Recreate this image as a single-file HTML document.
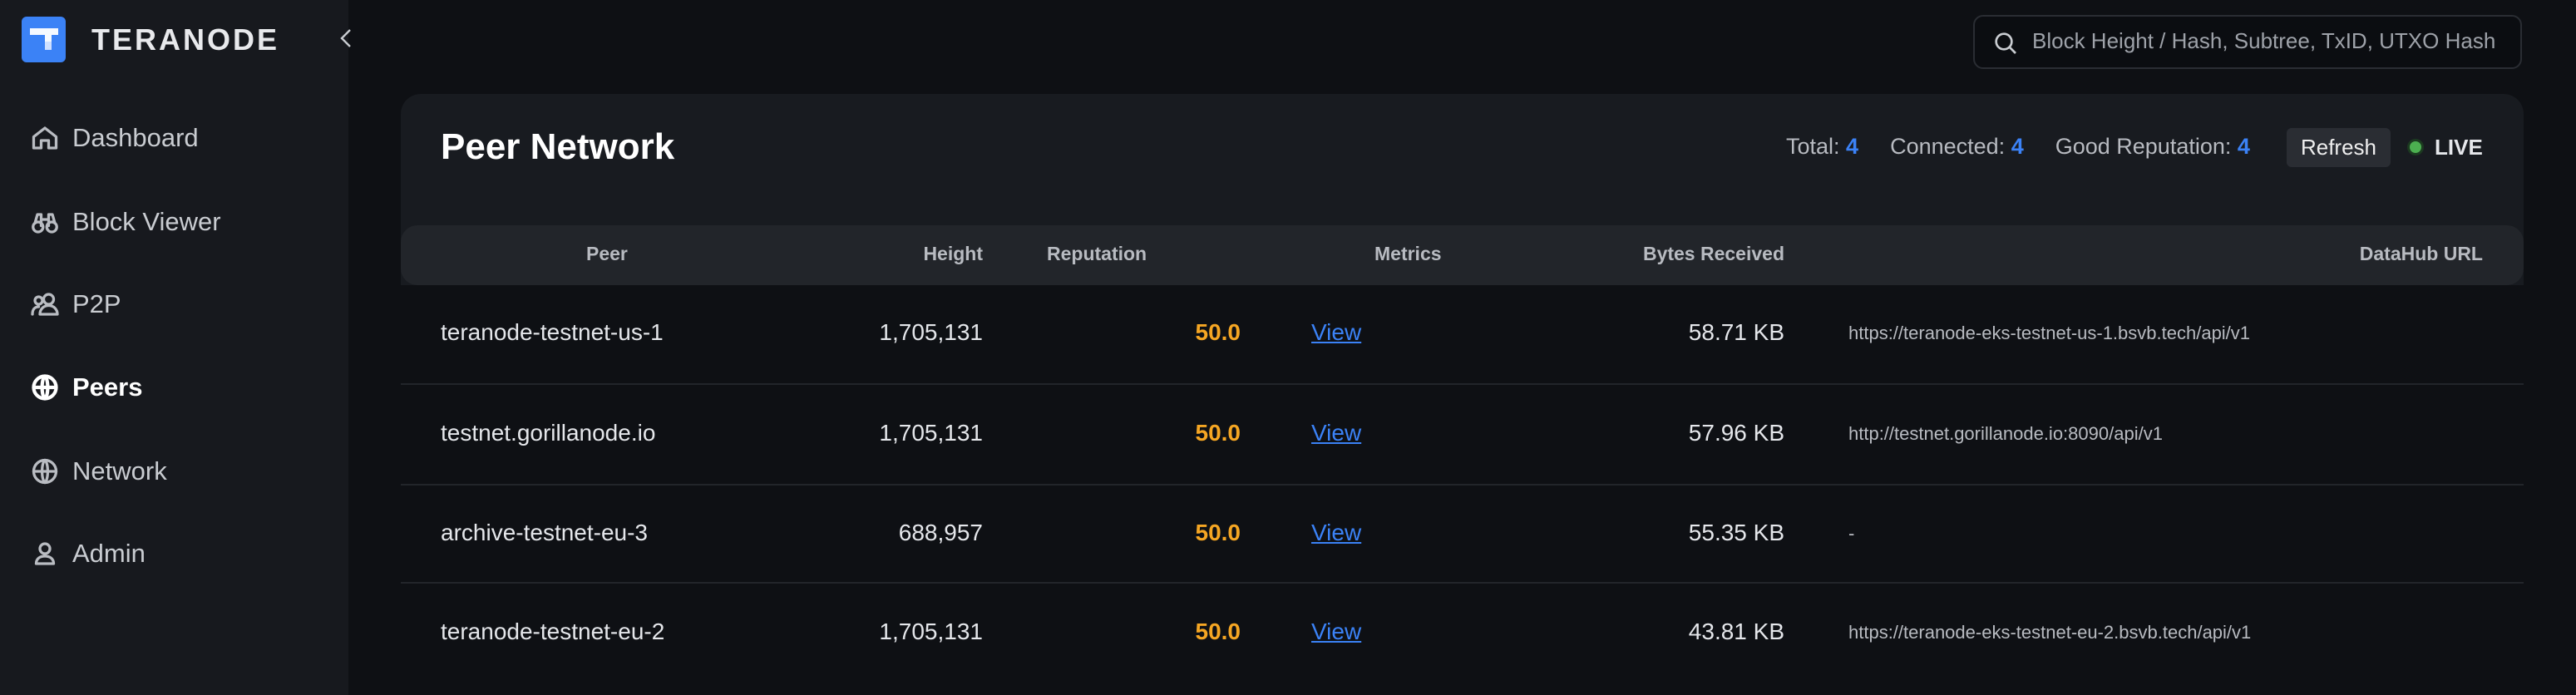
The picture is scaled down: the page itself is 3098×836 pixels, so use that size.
<!DOCTYPE html>
<html><head><meta charset="utf-8"><style>
*{margin:0;padding:0;box-sizing:border-box}
html,body{width:3098px;height:836px;overflow:hidden;background:#0e1014;font-family:"Liberation Sans",sans-serif;color:#e5e7eb}
.abs{position:absolute;white-space:nowrap}
#side{position:absolute;left:0;top:0;width:419px;height:836px;background:#17191e}
.nav{position:absolute;left:36px;height:40px;display:flex;align-items:center;font-size:31px;color:#c9ccd1}
.nav svg{width:36px;height:36px;margin-right:15px;fill:none;stroke:#b9bcc2;stroke-width:2.2;stroke-linecap:round;stroke-linejoin:round}
.th{position:absolute;top:292px;font-size:23px;font-weight:bold;color:#b8bbc1}
.td{position:absolute;font-size:28px;color:#e5e7eb;white-space:nowrap}
.r{text-align:right}
.line{position:absolute;left:482px;width:2553px;height:2px;background:#22252a}
</style></head><body>
<div id="side">
 <div class="abs" style="left:26px;top:20px;width:53px;height:55px;background:#3b82f6;border-radius:6px">
  <svg width="53" height="55" viewBox="0 0 53 55"><path d="M10 22h34v-8H10z M28 22v18h8V22" fill="#fff" opacity=".95"/><path d="M28 30v10h8V30z" fill="#cfe0ff"/></svg>
 </div>
 <div class="abs" style="left:110px;top:27px;font-size:36px;font-weight:bold;letter-spacing:3px;color:#e8e9ec">TERANODE</div>
 <svg class="abs" style="left:405px;top:33px" width="22" height="26" viewBox="0 0 22 26"><path d="M16 3L6 13l10 10" fill="none" stroke="#c9ccd1" stroke-width="2.4"/></svg>
 <div class="nav" style="top:146px"><svg viewBox="0 0 24 24"><path d="M3 11l9-7 9 7v9h-6v-6H9v6H3z"/></svg>Dashboard</div>
 <div class="nav" style="top:247px"><svg viewBox="0 0 24 24"><circle cx="6.5" cy="16" r="4"/><circle cx="17.5" cy="16" r="4"/><path d="M4 13l2-7h3v9M20 13l-2-7h-3v9M9 10h6"/></svg>Block Viewer</div>
 <div class="nav" style="top:346px"><svg viewBox="0 0 24 24"><circle cx="7" cy="9" r="3"/><circle cx="15" cy="8" r="4"/><path d="M2 20c0-4 2-6 5-6M8 20c0-4 3-7 7-7s7 3 7 7z"/></svg>P2P</div>
 <div class="nav" style="top:446px;color:#fff;font-weight:bold"><svg viewBox="0 0 24 24" style="stroke:#fff;stroke-width:2.8"><circle cx="12" cy="12" r="9"/><path d="M3 12h18M12 3c-3 3-3 15 0 18M12 3c3 3 3 15 0 18"/></svg>Peers</div>
 <div class="nav" style="top:547px"><svg viewBox="0 0 24 24"><circle cx="12" cy="12" r="9"/><path d="M3 12h18M12 3c-3 3-3 15 0 18M12 3c3 3 3 15 0 18"/></svg>Network</div>
 <div class="nav" style="top:646px"><svg viewBox="0 0 24 24"><circle cx="12" cy="8" r="4"/><path d="M5 20c0-4 3-6 7-6s7 2 7 6z"/></svg>Admin</div>
</div>
<div class="abs" style="left:2373px;top:18px;width:660px;height:65px;border:2px solid #2a2d33;border-radius:12px;background:#0b0d11"></div>
<svg class="abs" style="left:2396px;top:36px" width="32" height="32" viewBox="0 0 24 24"><circle cx="10.5" cy="10.5" r="7" fill="none" stroke="#c9ccd1" stroke-width="2"/><path d="M16 16l5 5" stroke="#c9ccd1" stroke-width="2"/></svg>
<div class="abs" style="left:2444px;top:34px;font-size:26px;color:#9ea2a9">Block Height / Hash, Subtree, TxID, UTXO Hash</div>

<div class="abs" style="left:482px;top:113px;width:2553px;height:230px;background:#181b20;border-radius:24px 24px 0 0"></div>
<div class="abs" style="left:482px;top:271px;width:2553px;height:72px;background:#22252a;border-radius:20px"></div>
<div class="abs" style="left:530px;top:152px;font-size:44px;font-weight:bold;color:#fff">Peer Network</div>
<div class="abs" style="left:2148px;top:161px;font-size:27px;color:#b8bbc1">Total: <span style="color:#3b82f6;font-weight:bold">4</span><span style="margin-left:38px">Connected: <span style="color:#3b82f6;font-weight:bold">4</span></span><span style="margin-left:38px">Good Reputation: <span style="color:#3b82f6;font-weight:bold">4</span></span></div>
<div class="abs" style="left:2750px;top:154px;width:125px;height:47px;background:#2a2d33;border-radius:6px;font-size:26px;color:#eee;text-align:center;line-height:47px">Refresh</div>
<div class="abs" style="left:2898px;top:170px;width:14px;height:14px;border-radius:50%;background:#4caf50;box-shadow:0 0 0 3px #1c3a20"></div>
<div class="abs" style="left:2928px;top:162px;font-size:26px;font-weight:bold;color:#e5e7eb">LIVE</div>

<div class="th" style="left:705px">Peer</div>
<div class="th r" style="left:1000px;width:182px">Height</div>
<div class="th" style="left:1259px">Reputation</div>
<div class="th" style="left:1653px">Metrics</div>
<div class="th r" style="left:1800px;width:346px">Bytes Received</div>
<div class="th r" style="left:2700px;width:286px">DataHub URL</div>

<div class="line" style="top:461px"></div>
<div class="line" style="top:582px"></div>
<div class="line" style="top:700px"></div>

<div class="td" style="left:530px;top:384px">teranode-testnet-us-1</div>
<div class="td r" style="left:1000px;width:182px;top:384px">1,705,131</div>
<div class="td r" style="left:1300px;width:192px;top:384px;color:#f5a623;font-weight:bold">50.0</div>
<div class="td" style="left:1577px;top:384px;color:#3b82f6;text-decoration:underline">View</div>
<div class="td r" style="left:1800px;width:346px;top:384px">58.71 KB</div>
<div class="td" style="left:2223px;top:388px;font-size:22px;color:#b8bbc1">https://teranode-eks-testnet-us-1.bsvb.tech/api/v1</div>

<div class="td" style="left:530px;top:505px">testnet.gorillanode.io</div>
<div class="td r" style="left:1000px;width:182px;top:505px">1,705,131</div>
<div class="td r" style="left:1300px;width:192px;top:505px;color:#f5a623;font-weight:bold">50.0</div>
<div class="td" style="left:1577px;top:505px;color:#3b82f6;text-decoration:underline">View</div>
<div class="td r" style="left:1800px;width:346px;top:505px">57.96 KB</div>
<div class="td" style="left:2223px;top:509px;font-size:22px;color:#b8bbc1">http://testnet.gorillanode.io:8090/api/v1</div>

<div class="td" style="left:530px;top:625px">archive-testnet-eu-3</div>
<div class="td r" style="left:1000px;width:182px;top:625px">688,957</div>
<div class="td r" style="left:1300px;width:192px;top:625px;color:#f5a623;font-weight:bold">50.0</div>
<div class="td" style="left:1577px;top:625px;color:#3b82f6;text-decoration:underline">View</div>
<div class="td r" style="left:1800px;width:346px;top:625px">55.35 KB</div>
<div class="td" style="left:2223px;top:629px;font-size:22px;color:#b8bbc1">-</div>

<div class="td" style="left:530px;top:744px">teranode-testnet-eu-2</div>
<div class="td r" style="left:1000px;width:182px;top:744px">1,705,131</div>
<div class="td r" style="left:1300px;width:192px;top:744px;color:#f5a623;font-weight:bold">50.0</div>
<div class="td" style="left:1577px;top:744px;color:#3b82f6;text-decoration:underline">View</div>
<div class="td r" style="left:1800px;width:346px;top:744px">43.81 KB</div>
<div class="td" style="left:2223px;top:748px;font-size:22px;color:#b8bbc1">https://teranode-eks-testnet-eu-2.bsvb.tech/api/v1</div>
</body></html>
